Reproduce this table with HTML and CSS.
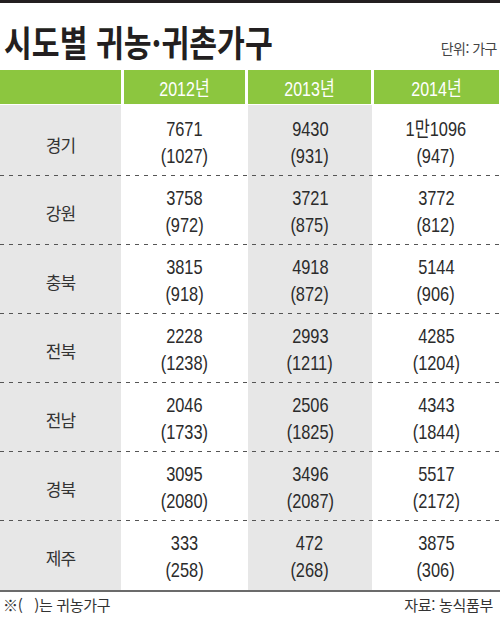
FILE: index.html
```html
<!DOCTYPE html>
<html lang="ko">
<head>
    <meta charset="UTF-8">
    <meta name="viewport" content="width=device-width, initial-scale=1.0">
    <title>시도별 귀농·귀촌가구</title>
    <link rel="stylesheet" href="styles.css">
</head>
<body>
    <div class="top-bar"></div>

    <div class="head">
        <h1 class="title"><span>시도별 귀농·귀촌가구</span></h1>
        <div class="unit">단위: 가구</div>
    </div>

    <!-- Header row -->
    <div class="thead">
        <div class="th"></div>
        <div class="th"><span>2012년</span></div>
        <div class="th"><span>2013년</span></div>
        <div class="th"><span>2014년</span></div>
    </div>

    <!-- Body rows -->
    <div class="tbody">
        <div class="row first">
            <div class="region">경기</div>
            <div class="cell"><span>7671</span><span>(1027)</span></div>
            <div class="cell"><span>9430</span><span>(931)</span></div>
            <div class="cell"><span>1만1096</span><span>(947)</span></div>
        </div>
        <div class="row">
            <div class="region">강원</div>
            <div class="cell"><span>3758</span><span>(972)</span></div>
            <div class="cell"><span>3721</span><span>(875)</span></div>
            <div class="cell"><span>3772</span><span>(812)</span></div>
        </div>
        <div class="row">
            <div class="region">충북</div>
            <div class="cell"><span>3815</span><span>(918)</span></div>
            <div class="cell"><span>4918</span><span>(872)</span></div>
            <div class="cell"><span>5144</span><span>(906)</span></div>
        </div>
        <div class="row">
            <div class="region">전북</div>
            <div class="cell"><span>2228</span><span>(1238)</span></div>
            <div class="cell"><span>2993</span><span>(1211)</span></div>
            <div class="cell"><span>4285</span><span>(1204)</span></div>
        </div>
        <div class="row">
            <div class="region">전남</div>
            <div class="cell"><span>2046</span><span>(1733)</span></div>
            <div class="cell"><span>2506</span><span>(1825)</span></div>
            <div class="cell"><span>4343</span><span>(1844)</span></div>
        </div>
        <div class="row">
            <div class="region">경북</div>
            <div class="cell"><span>3095</span><span>(2080)</span></div>
            <div class="cell"><span>3496</span><span>(2087)</span></div>
            <div class="cell"><span>5517</span><span>(2172)</span></div>
        </div>
        <div class="row last">
            <div class="region">제주</div>
            <div class="cell"><span>333</span><span>(258)</span></div>
            <div class="cell"><span>472</span><span>(268)</span></div>
            <div class="cell"><span>3875</span><span>(306)</span></div>
        </div>
    </div>

    <div class="foot">
        <span>※(&nbsp;&nbsp;&nbsp;)는 귀농가구</span>
        <span>자료: 농식품부</span>
    </div>
</body>
</html>
```

FILE: styles.css
```css
* {
    margin: 0;
    padding: 0;
    box-sizing: border-box;
}

body {
    width: 500px;
    background: #fff;
    color: #333;
    font-family: 'Noto Sans CJK KR', 'Noto Sans', sans-serif;
}

.top-bar {
    height: 3px;
    background: #231f20;
}

.head {
    display: flex;
    justify-content: space-between;
    align-items: center;
    height: 67px;
    padding: 20px 3px 11px 4px;
}

.title {
    font-size: 36px;
    line-height: 36px;
    font-weight: 700;
    color: #231f20;
    white-space: nowrap;
}

.title span {
    display: inline-block;
    transform: scaleX(0.84);
    transform-origin: left center;
}

.unit {
    margin-top: 14px;
    font-size: 14px;
    color: #444;
    letter-spacing: -0.5px;
}

.thead {
    display: grid;
    grid-template-columns: 121px 121px 123px 125px;
    column-gap: 3px;
    height: 34px;
    margin-bottom: 1px;
}

.th {
    background: #8cc63f;
    color: #fff;
    display: flex;
    justify-content: center;
    align-items: center;
    font-family: 'Liberation Sans', 'Noto Sans CJK KR', sans-serif;
    font-size: 20px;
}

.th span {
    display: inline-block;
    transform: scaleX(0.8);
    white-space: nowrap;
}

.tbody {
    background: linear-gradient(to right,
        #e7e7e7 0 121px,
        #fff 121px 248px,
        #e7e7e7 248px 372px,
        #fff 372px);
    border-bottom: 2px solid #6b6b6b;
}

.row {
    display: grid;
    grid-template-columns: 121px 127px 124px 128px;
    height: 69px;
    background: repeating-linear-gradient(to right, #555 0 4px, transparent 4px 9px) bottom / 100% 1px no-repeat;
}

.row.first {
    height: 71px;
    padding-top: 3px;
}

.row.last {
    background: none;
}

.region {
    display: flex;
    justify-content: center;
    align-items: center;
    padding-top: 4px;
    font-size: 17px;
    letter-spacing: -1px;
    color: #333;
}

.cell {
    display: flex;
    flex-direction: column;
    justify-content: center;
    align-items: center;
    font-family: 'Liberation Sans', 'Noto Sans CJK KR', sans-serif;
    font-size: 21px;
    line-height: 27px;
    color: #2b2b2b;
}

.cell span {
    display: block;
    transform: scaleX(0.78);
    white-space: nowrap;
}

.foot {
    display: flex;
    justify-content: space-between;
    padding: 3px 7px 0 3px;
    font-size: 15px;
    line-height: 20px;
    color: #333;
    letter-spacing: -0.3px;
}
```
